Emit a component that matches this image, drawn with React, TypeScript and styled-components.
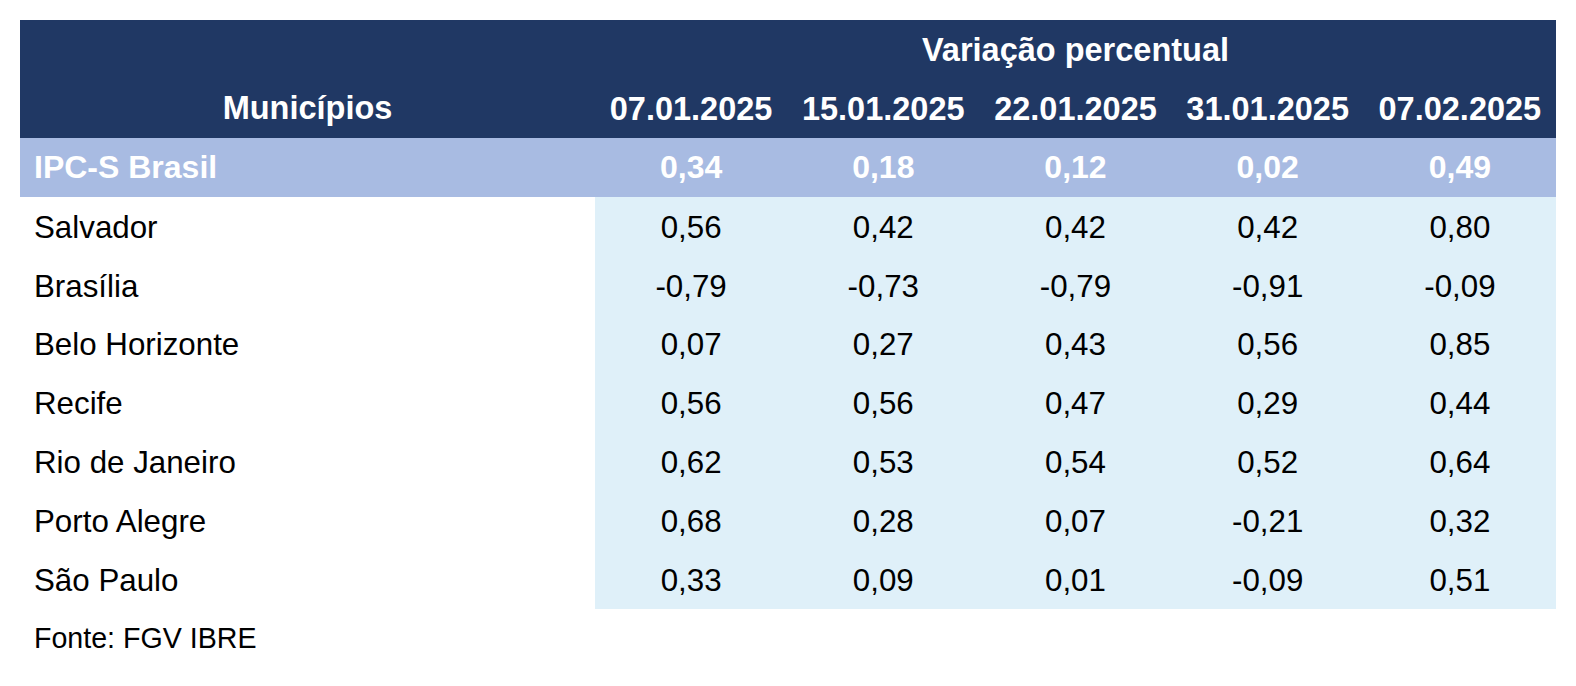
import styled, { createGlobalStyle } from 'styled-components';

const NAVY = '#203864';
const MID_BLUE = '#a8bbe2';
const LIGHT_BLUE = '#dff0f9';

const DATES = ['07.01.2025', '15.01.2025', '22.01.2025', '31.01.2025', '07.02.2025'];

const BRASIL = ['0,34', '0,18', '0,12', '0,02', '0,49'];

const CITIES: { name: string; values: string[] }[] = [
    { name: 'Salvador', values: ['0,56', '0,42', '0,42', '0,42', '0,80'] },
    { name: 'Brasília', values: ['-0,79', '-0,73', '-0,79', '-0,91', '-0,09'] },
    { name: 'Belo Horizonte', values: ['0,07', '0,27', '0,43', '0,56', '0,85'] },
    { name: 'Recife', values: ['0,56', '0,56', '0,47', '0,29', '0,44'] },
    { name: 'Rio de Janeiro', values: ['0,62', '0,53', '0,54', '0,52', '0,64'] },
    { name: 'Porto Alegre', values: ['0,68', '0,28', '0,07', '-0,21', '0,32'] },
    { name: 'São Paulo', values: ['0,33', '0,09', '0,01', '-0,09', '0,51'] },
];

const GlobalStyle = createGlobalStyle`
    html, body {
        margin: 0;
        padding: 0;
        background: #ffffff;
    }
    body {
        font-family: 'Liberation Sans', Arial, sans-serif;
        color: #000000;
    }
`;

const Page = styled.div`
    padding: 20px 20px 0 20px;
`;

const Table = styled.table`
    width: 1536px;
    border-collapse: collapse;
    table-layout: fixed;
    font-size: 31.3px;
`;

const HeadRow = styled.tr`
    background: ${NAVY};
    height: 59px;
`;

const HeadCell = styled.th<{ $bottom?: boolean }>`
    color: #ffffff;
    font-weight: 700;
    font-size: 32.5px;
    text-align: center;
    padding: ${({ $bottom }) => ($bottom ? '0 0 11px 0' : '2px 0 0 0')};
    vertical-align: ${({ $bottom }) => ($bottom ? 'bottom' : 'middle')};
`;

const SummaryRow = styled.tr`
    background: ${MID_BLUE};
    height: 59px;
`;

const SummaryName = styled.td`
    color: #ffffff;
    font-weight: 700;
    font-size: 32px;
    padding: 0 0 0 14px;
`;

const SummaryValue = styled.td`
    color: #ffffff;
    font-weight: 700;
    font-size: 32px;
    text-align: center;
`;

const BodyRow = styled.tr`
    height: 58.8px;
`;

const CityName = styled.td`
    padding: 3px 0 0 14px;
    background: #ffffff;
`;

const Value = styled.td`
    padding: 3px 0 0 0;
    text-align: center;
    background: ${LIGHT_BLUE};
`;

const Source = styled.p`
    margin: 0;
    padding-left: 14px;
    height: 58px;
    line-height: 58px;
    font-size: 28.6px;
`;

export default function App() {
    return (
        <Page>
            <GlobalStyle />
            <Table>
                <colgroup>
                    <col style={{ width: 575 }} />
                    {DATES.map((d) => (
                        <col key={d} />
                    ))}
                </colgroup>
                <thead>
                    <HeadRow>
                        <HeadCell rowSpan={2} $bottom>
                            Municípios
                        </HeadCell>
                        <HeadCell colSpan={5}>Variação percentual</HeadCell>
                    </HeadRow>
                    <HeadRow>
                        {DATES.map((d) => (
                            <HeadCell key={d}>{d}</HeadCell>
                        ))}
                    </HeadRow>
                </thead>
                <tbody>
                    <SummaryRow>
                        <SummaryName>IPC-S Brasil</SummaryName>
                        {BRASIL.map((v, i) => (
                            <SummaryValue key={i}>{v}</SummaryValue>
                        ))}
                    </SummaryRow>
                    {CITIES.map((city) => (
                        <BodyRow key={city.name}>
                            <CityName>{city.name}</CityName>
                            {city.values.map((v, i) => (
                                <Value key={i}>{v}</Value>
                            ))}
                        </BodyRow>
                    ))}
                </tbody>
            </Table>
            <Source>Fonte: FGV IBRE</Source>
        </Page>
    );
}
